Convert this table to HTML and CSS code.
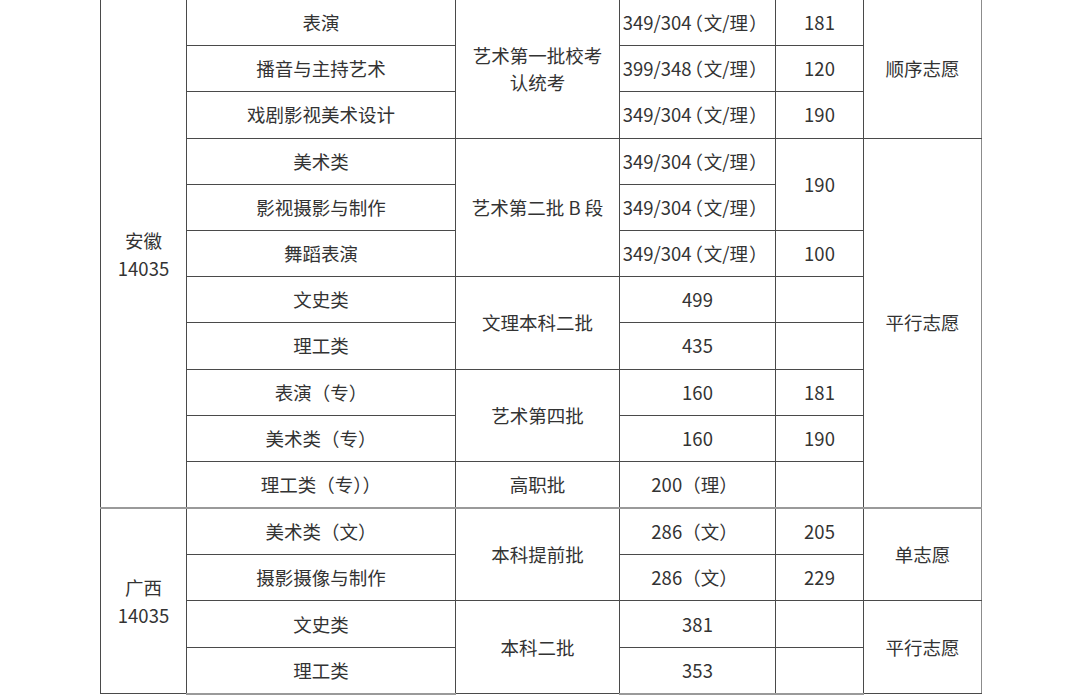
FILE: index.html
```html
<!DOCTYPE html>
<html lang="zh">
<head>
<meta charset="utf-8">
<title>录取分数</title>
<link rel="stylesheet" href="styles.css">
</head>
<body>
<table class="score-table">
  <colgroup>
    <col class="c-prov">
    <col class="c-major">
    <col class="c-batch">
    <col class="c-line">
    <col class="c-score">
    <col class="c-mode">
  </colgroup>
  <tbody>
    <tr>
      <td rowspan="11" class="prov">安徽<br>14035</td>
      <td>表演</td>
      <td rowspan="3" class="multi">艺术第一批校考<br>认统考</td>
      <td class="mixed">349/304<span class="paren">（</span>文/理<span class="paren">）</span></td>
      <td>181</td>
      <td rowspan="3">顺序志愿</td>
    </tr>
    <tr>
      <td>播音与主持艺术</td>
      <td class="mixed">399/348<span class="paren">（</span>文/理<span class="paren">）</span></td>
      <td>120</td>
    </tr>
    <tr>
      <td>戏剧影视美术设计</td>
      <td class="mixed">349/304<span class="paren">（</span>文/理<span class="paren">）</span></td>
      <td>190</td>
    </tr>
    <tr>
      <td>美术类</td>
      <td rowspan="3">艺术第二批 B 段</td>
      <td class="mixed">349/304<span class="paren">（</span>文/理<span class="paren">）</span></td>
      <td rowspan="2">190</td>
      <td rowspan="8">平行志愿</td>
    </tr>
    <tr>
      <td>影视摄影与制作</td>
      <td class="mixed">349/304<span class="paren">（</span>文/理<span class="paren">）</span></td>
    </tr>
    <tr>
      <td>舞蹈表演</td>
      <td class="mixed">349/304<span class="paren">（</span>文/理<span class="paren">）</span></td>
      <td>100</td>
    </tr>
    <tr>
      <td>文史类</td>
      <td rowspan="2">文理本科二批</td>
      <td>499</td>
      <td></td>
    </tr>
    <tr>
      <td>理工类</td>
      <td>435</td>
      <td></td>
    </tr>
    <tr>
      <td>表演（专）</td>
      <td rowspan="2">艺术第四批</td>
      <td>160</td>
      <td>181</td>
    </tr>
    <tr>
      <td>美术类（专）</td>
      <td>160</td>
      <td>190</td>
    </tr>
    <tr>
      <td>理工类（专））</td>
      <td>高职批</td>
      <td class="short">200（理）</td>
      <td></td>
    </tr>
    <tr class="section">
      <td rowspan="4" class="prov">广西<br>14035</td>
      <td>美术类（文）</td>
      <td rowspan="2">本科提前批</td>
      <td class="short">286（文）</td>
      <td>205</td>
      <td rowspan="2">单志愿</td>
    </tr>
    <tr>
      <td>摄影摄像与制作</td>
      <td class="short">286（文）</td>
      <td>229</td>
    </tr>
    <tr>
      <td>文史类</td>
      <td rowspan="2">本科二批</td>
      <td>381</td>
      <td></td>
      <td rowspan="2">平行志愿</td>
    </tr>
    <tr class="last">
      <td>理工类</td>
      <td>353</td>
      <td></td>
    </tr>
  </tbody>
</table>
</body>
</html>
```

FILE: styles.css
```css
html, body {
  margin: 0;
  padding: 0;
  background: #ffffff;
}

body {
  font-family: "Noto Sans CJK SC", "Noto Sans", sans-serif;
  color: #333333;
}

.score-table {
  margin: -1px 0 0 100px;
  border-collapse: collapse;
  table-layout: fixed;
  width: 881px;
  font-size: 18.5px;
}

.c-prov { width: 86px; }
.c-major { width: 269px; }
.c-batch { width: 164px; }
.c-line { width: 156px; }
.c-score { width: 88px; }
.c-mode { width: 118px; }

.score-table td {
  border: 1px solid #4a4a4a;
  height: 45.2px;
  padding: 0;
  text-align: center;
  vertical-align: middle;
  line-height: 27px;
  white-space: nowrap;
}

.score-table td.mixed {
  padding-right: 12px;
}

.score-table td.mixed .paren {
  font-feature-settings: "palt";
  margin: 0 1.5px;
}

.score-table td.short {
  padding-right: 6px;
}

.score-table td:last-child[rowspan] {
  border-right-color: #8c8c8c;
}

.score-table tr.section td {
  border-top: 2px solid #9a9a9a;
}

.score-table tr.last td {
  border-bottom: 2px solid #9a9a9a;
}

.score-table .prov {
  line-height: 28px;
}
```
